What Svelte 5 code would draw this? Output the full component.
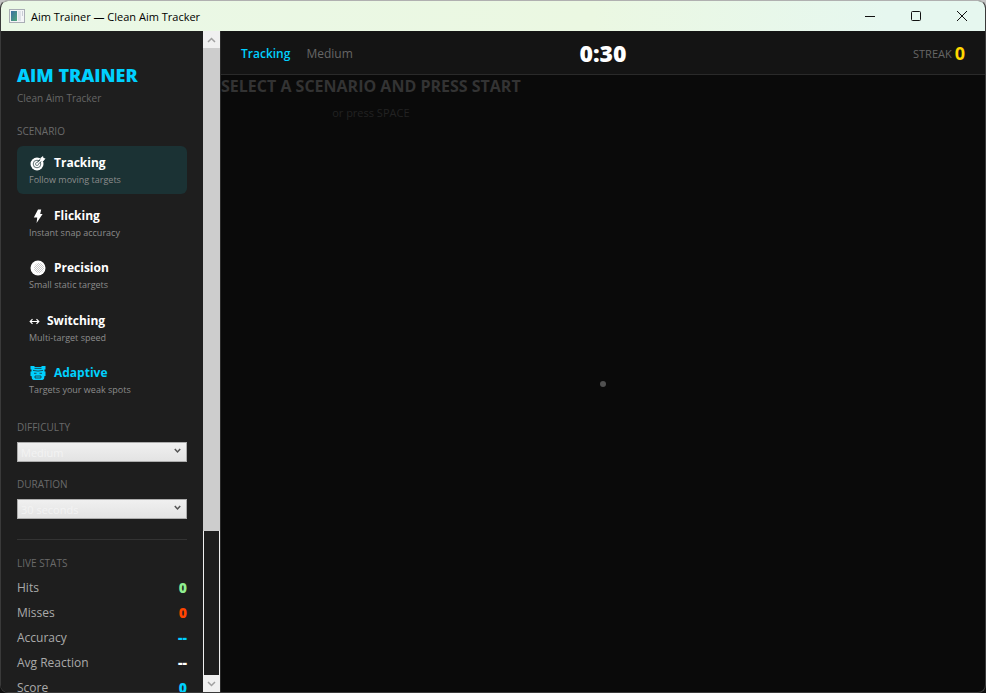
<script lang="ts">
    type Mode = { id: string; name: string; hint: string };

    const MODES: Mode[] = [
        { id: 'tracking', name: 'Tracking', hint: 'Follow moving targets' },
        { id: 'flicking', name: 'Flicking', hint: 'Instant snap accuracy' },
        { id: 'precision', name: 'Precision', hint: 'Small static targets' },
        { id: 'switching', name: 'Switching', hint: 'Multi-target speed' },
        { id: 'adaptive', name: 'Adaptive', hint: 'Targets your weak spots' }
    ];
    const DIFFICULTIES = ['Easy', 'Medium', 'Hard'];
    const DURATIONS = [15, 30, 60];

    let mode = $state('tracking');
    let difficulty = $state('Medium');
    let duration = $state(30);

    const modeName = $derived(MODES.find((m) => m.id === mode)?.name);
    const clock = $derived(`${Math.floor(duration / 60)}:${String(duration % 60).padStart(2, '0')}`);

    const stats = [
        { label: 'Hits', value: '0', tone: 'green' },
        { label: 'Misses', value: '0', tone: 'red' },
        { label: 'Accuracy', value: '--', tone: 'cyan' },
        { label: 'Avg Reaction', value: '--', tone: 'white' },
        { label: 'Score', value: '0', tone: 'cyan' }
    ];
</script>

{#snippet chevron()}
    <svg class="chevron" viewBox="0 0 7 6" aria-hidden="true">
        <path d="M0.8 1 L3.5 4 L6.2 1" fill="none" stroke="currentColor" stroke-width="1.5" />
    </svg>
{/snippet}

<div class="window">
    <header class="titlebar">
        <svg class="app-icon" viewBox="0 0 16 14" aria-hidden="true">
            <defs>
                <linearGradient id="pane" x1="0" y1="0" x2="1" y2="1">
                    <stop offset="0" stop-color="#3d6fa5" />
                    <stop offset="1" stop-color="#4fa777" />
                </linearGradient>
            </defs>
            <rect x="0.5" y="0.5" width="15" height="13" fill="#f4f5f7" stroke="#a9adb5" />
            <rect x="2" y="2" width="6" height="10" fill="url(#pane)" />
            <rect x="9" y="2" width="3" height="10" fill="#dfe2e8" />
            <rect x="13" y="2" width="1" height="5" fill="#c9cdd6" />
        </svg>
        <span class="app-title">Aim Trainer — Clean Aim Tracker</span>
        <div class="caption-buttons">
            <button type="button" aria-label="Minimize">
                <svg viewBox="0 0 12 12"><path d="M1 6.5H11" /></svg>
            </button>
            <button type="button" aria-label="Maximize">
                <svg viewBox="0 0 12 12"><rect x="1.5" y="1.5" width="9" height="9" rx="1" /></svg>
            </button>
            <button type="button" aria-label="Close">
                <svg viewBox="0 0 12 12"><path d="M1 1L11 11M11 1L1 11" /></svg>
            </button>
        </div>
    </header>

    <div class="body">
        <aside class="sidebar">
            <h1>AIM TRAINER</h1>
            <p class="tagline">Clean Aim Tracker</p>

            <h2>SCENARIO</h2>
            <div class="modes">
                {#each MODES as m}
                    <button
                        type="button"
                        class="mode"
                        class:selected={mode === m.id}
                        class:accent={m.id === 'adaptive'}
                        onclick={() => (mode = m.id)}
                    >
                        <span class="mode-name">
                            {#if m.id === 'tracking'}
                                <svg class="icon" viewBox="0 0 18 16">
                                    <circle cx="8" cy="9" r="6.5" fill="#fff" />
                                    <circle cx="8" cy="9" r="3.8" fill="none" stroke="#1b3234" stroke-width="0.7" />
                                    <circle cx="8" cy="9" r="1.5" fill="none" stroke="#1b3234" stroke-width="0.6" />
                                    <path d="M9 8L12.5 4.5" stroke="#1b3234" stroke-width="2.6" />
                                    <path d="M8 9L13 4.5" stroke="#fff" stroke-width="1.4" />
                                    <path d="M11 5.5L11.5 3L14 1L14.5 3L16.5 3.5L14.5 6L12 6.5Z" fill="#fff" />
                                </svg>
                            {:else if m.id === 'flicking'}
                                <svg class="icon" viewBox="0 0 18 16">
                                    <path d="M9 1.5H12.2L11.2 6H13.6L7.6 15L8.2 9.6H4.8Z" fill="#fff" />
                                </svg>
                            {:else if m.id === 'precision'}
                                <svg class="icon" viewBox="0 0 18 16">
                                    <defs>
                                        <pattern id="mesh" width="2" height="2" patternUnits="userSpaceOnUse">
                                            <rect width="1" height="1" fill="#c8c8c8" />
                                            <rect x="1" y="1" width="1" height="1" fill="#c8c8c8" />
                                        </pattern>
                                    </defs>
                                    <circle cx="9" cy="8" r="7.5" fill="#fff" />
                                    <circle cx="10" cy="8" r="5" fill="url(#mesh)" />
                                </svg>
                            {:else if m.id === 'switching'}
                                <svg class="icon narrow" viewBox="0 0 11 16">
                                    <path d="M1 8.5H10M3.5 6.2L1.2 8.5L3.5 10.8M7.5 6.2L9.8 8.5L7.5 10.8" fill="none" stroke="#fff" stroke-width="1.2" />
                                </svg>
                            {:else}
                                <svg class="icon" viewBox="0 0 18 16">
                                    <path d="M1.5 1H5L6 2H12L13 1H16.5V4.5H15.5V6.5H16.5V11H15.5L15 14L13.5 15H4.5L3 14L2.5 11H1.5V6.5H2.5V4.5H1.5Z" fill="#00d0ff" />
                                    <path d="M5.5 3.4H12.5M4 5.4Q9 6.8 14 5.4M5 8.3H7.5M10.5 8.3H13M6 11H12V13H6Z" fill="none" stroke="#1e1e1e" stroke-width="0.7" />
                                </svg>
                            {/if}
                            {m.name}
                        </span>
                        <span class="mode-hint">{m.hint}</span>
                    </button>
                {/each}
            </div>

            <div class="field">
                <label for="difficulty">DIFFICULTY</label>
                <div class="combo">
                    <select id="difficulty" bind:value={difficulty}>
                        {#each DIFFICULTIES as d}
                            <option value={d}>{d}</option>
                        {/each}
                    </select>
                    {@render chevron()}
                </div>
            </div>
            <div class="field">
                <label for="duration">DURATION</label>
                <div class="combo">
                    <select id="duration" bind:value={duration}>
                        {#each DURATIONS as d}
                            <option value={d}>{d} seconds</option>
                        {/each}
                    </select>
                    {@render chevron()}
                </div>
            </div>

            <hr />

            <h2 class="stats-head">LIVE STATS</h2>
            <dl>
                {#each stats as s}
                    <div class="stat">
                        <dt>{s.label}</dt>
                        <dd class={s.tone}>{s.value}</dd>
                    </div>
                {/each}
            </dl>
        </aside>

        <div class="scrollbar">
            <button type="button" aria-label="Scroll up">
                <svg viewBox="0 0 9 6"><path d="M1 5L4.5 1.5L8 5" /></svg>
            </button>
            <div class="track"><div class="thumb"></div></div>
            <button type="button" aria-label="Scroll down">
                <svg viewBox="0 0 9 6"><path d="M1 1L4.5 4.5L8 1" /></svg>
            </button>
        </div>

        <main>
            <div class="hud">
                <div class="hud-left">
                    <span class="hud-mode">{modeName}</span>
                    <span class="hud-level">{difficulty}</span>
                </div>
                <span class="clock">{clock}</span>
                <div class="streak">
                    <span class="streak-label">STREAK</span>
                    <span class="streak-value">0</span>
                </div>
            </div>
            <div class="arena">
                <div class="prompt">
                    <p class="prompt-main">SELECT A SCENARIO AND PRESS START</p>
                    <p class="prompt-sub">or press SPACE</p>
                </div>
                <span class="crosshair"></span>
            </div>
        </main>
    </div>
</div>

<style>
    :global(body) {
        margin: 0;
        background: linear-gradient(#c4c4c4 20px, #101010 20px);
    }
    .window {
        display: flex;
        flex-direction: column;
        box-sizing: border-box;
        height: 100vh;
        overflow: hidden;
        border: 1px solid #3a3a3a;
        border-top-color: #b0b0b0;
        border-radius: 8px;
        background: #0a0a0a;
        font-family: 'Open Sans', 'Noto Sans', sans-serif;
        color: #fff;
    }
    h1, h2, p, dl, dd { margin: 0; }
    button {
        padding: 0;
        border: 0;
        background: none;
        font: inherit;
        color: inherit;
    }

    .titlebar {
        display: flex;
        align-items: center;
        flex: none;
        height: 30px;
        padding-left: 8px;
        background: linear-gradient(90deg, #eaf8e6, #ebf8e2 60%, #e6f7ef 90%);
        color: #000;
    }
    .app-icon { width: 16px; height: 14px; margin-right: 6px; }
    .app-title { font-size: 11px; }
    .caption-buttons { display: flex; margin-left: auto; }
    .caption-buttons button {
        display: grid;
        place-items: center;
        width: 46px;
        height: 30px;
    }
    .caption-buttons svg {
        width: 12px;
        height: 12px;
        fill: none;
        stroke: #111;
    }

    .body { display: flex; flex: 1; min-height: 0; }
    .sidebar {
        flex: none;
        box-sizing: border-box;
        width: 202px;
        padding: 32px 16px 0;
        overflow: hidden;
        background: #1e1e1e;
    }
    h1 {
        font-size: 18px;
        font-weight: 800;
        line-height: 24px;
        color: #00d0ff;
    }
    .tagline {
        margin-top: 4px;
        font-size: 10px;
        line-height: 14px;
        color: #666;
    }
    h2, label {
        display: block;
        margin-bottom: 8px;
        font-size: 10px;
        font-weight: 500;
        line-height: 14px;
        color: #6a6a6a;
    }
    h2 { margin-top: 19px; }

    .modes {
        display: flex;
        flex-direction: column;
        justify-content: space-between;
        min-height: 258px;
        margin-bottom: 16px;
    }
    .mode {
        display: block;
        padding: 8px 12px 6px;
        border-radius: 6px;
        text-align: left;
    }
    .mode.selected { background: #1b3234; }
    .mode-name {
        display: flex;
        align-items: center;
        gap: 7px;
        font-size: 12px;
        font-weight: 700;
        line-height: 18px;
    }
    .accent .mode-name { color: #00d0ff; }
    .mode-hint {
        display: block;
        font-size: 9px;
        line-height: 16px;
        color: #8c8c8c;
    }
    .icon { width: 18px; height: 16px; }
    .icon.narrow { width: 11px; }

    .field { margin-bottom: 15px; }
    .combo { position: relative; }
    select {
        display: block;
        appearance: none;
        width: 100%;
        height: 20px;
        padding: 2px 3px 0;
        border: 1px solid #acacac;
        border-radius: 0;
        background: linear-gradient(#f0f0f0, #e3e3e3);
        font: 11px/16px 'Open Sans', 'Noto Sans', sans-serif;
        color: #f3f3f3;
    }
    .chevron {
        position: absolute;
        top: 6px;
        right: 6px;
        width: 7px;
        height: 6px;
        color: #555;
        pointer-events: none;
    }
    hr {
        height: 1px;
        margin: 20px 0 16px;
        border: 0;
        background: #333;
    }
    .stats-head { margin-top: 0; }
    .stat {
        display: flex;
        justify-content: space-between;
        margin-bottom: 5px;
        line-height: 20px;
    }
    dt { font-size: 12px; color: #aaa; }
    dd { font-size: 14px; font-weight: 800; }
    .green { color: #90ee90; }
    .red { color: #ff4500; }
    .cyan { color: #00d0ff; }

    .scrollbar {
        display: flex;
        flex-direction: column;
        flex: none;
        width: 17px;
    }
    .scrollbar button {
        display: grid;
        place-items: center;
        height: 17px;
        background: #f0f0f0;
    }
    .scrollbar svg {
        width: 9px;
        height: 6px;
        fill: none;
        stroke: #a0a0a0;
        stroke-width: 1.5;
    }
    .track {
        flex: 1;
        box-sizing: border-box;
        border: solid #f0f0f0;
        border-width: 0 1px;
        background: #1e1e1e;
    }
    .thumb { height: 77%; margin: 0 -1px; background: #cdcdcd; }

    main {
        display: flex;
        flex: 1;
        flex-direction: column;
        min-width: 0;
        border-left: 1px solid #2a2a2a;
    }
    .hud {
        display: grid;
        grid-template-columns: 1fr auto 1fr;
        align-items: center;
        box-sizing: border-box;
        height: 44px;
        padding: 1px 20px 0;
        border-bottom: 1px solid #2a2a2a;
        background: #141414;
    }
    .hud-left { display: flex; align-items: center; gap: 16px; }
    .hud-mode { font-size: 12px; font-weight: 600; color: #00d0ff; }
    .hud-level { font-size: 12px; color: #666; }
    .clock { font-size: 23px; font-weight: 800; line-height: 28px; }
    .streak {
        display: flex;
        align-items: center;
        justify-content: flex-end;
        gap: 3px;
    }
    .streak-label { font-size: 11px; color: #666; }
    .streak-value { font-size: 18px; font-weight: 700; color: #ffd700; }

    .arena { display: grid; flex: 1; }
    .prompt, .crosshair { grid-area: 1 / 1; }
    .prompt { place-self: start; text-align: center; }
    .prompt-main {
        font-size: 16px;
        font-weight: 700;
        line-height: 22px;
        color: #333;
    }
    .prompt-sub {
        margin-top: 6px;
        font-size: 11px;
        line-height: 20px;
        color: #222;
    }
    .crosshair {
        place-self: center;
        width: 6px;
        height: 6px;
        border-radius: 50%;
        background: #505050;
    }
</style>
